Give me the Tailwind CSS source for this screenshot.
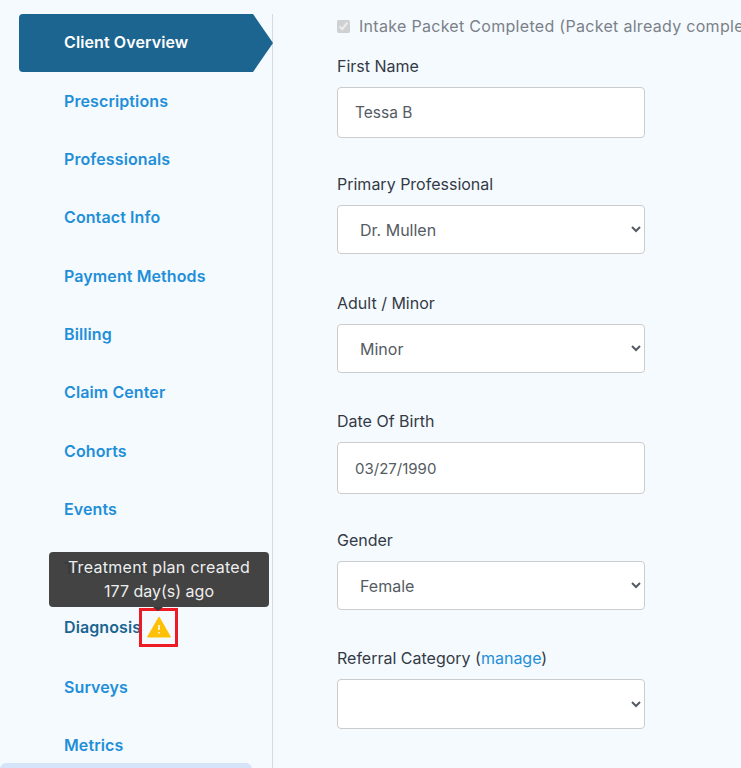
<!DOCTYPE html>
<html lang="en">
  <head>
    <meta charset="UTF-8" />
    <title>Client Overview</title>
    <script src="https://cdn.jsdelivr.net/npm/@tailwindcss/browser@4"></script>
  </head>
  <body class="bg-[#f5faff]">
    <div class="flex h-[768px] w-[741px] overflow-hidden pt-[14px] font-['Inter','Liberation_Sans',sans-serif]">
      <!-- sidebar -->
      <aside class="relative h-[754px] w-[273px] shrink-0 border-r border-[#d5dbe3] pl-[19px] text-[16px] font-semibold tracking-[0.1px] text-[#1f8fd8]">
        <div class="flex h-[58px] w-[254px] items-center rounded-[4px] bg-[#1b6590] pb-[2px] pl-[45px] text-white [clip-path:polygon(0_0,234px_0,100%_50%,234px_100%,0_100%)]">Client Overview</div>
        <div class="flex h-[59px] items-center pb-[2px] pl-[45px]">Prescriptions</div>
        <div class="flex h-[58px] items-center pb-[2px] pl-[45px]">Professionals</div>
        <div class="flex h-[58px] items-center pb-[2px] pl-[45px]">Contact Info</div>
        <div class="flex h-[59px] items-center pb-[2px] pl-[45px]">Payment Methods</div>
        <div class="flex h-[58px] items-center pb-[2px] pl-[45px]">Billing</div>
        <div class="flex h-[58px] items-center pb-[2px] pl-[45px]">Claim Center</div>
        <div class="flex h-[59px] items-center pb-[2px] pl-[45px]">Cohorts</div>
        <div class="flex h-[58px] items-center pb-[2px] pl-[45px]">Events</div>
        <div class="flex h-[59px] items-center pb-[2px] pl-[45px] text-[#1b6590]">Treatment</div>
        <div class="relative flex h-[59px] items-center pb-[2px] pl-[45px] text-[#1b6590]">
          Diagnosis
          <div class="absolute left-[120px] top-[10px] h-[39px] w-[39px] border-[3px] border-[#ed1c24] bg-[#f5faff]">
            <svg class="absolute left-[5px] top-[5px]" width="24" height="22" viewBox="0 0 24 22">
              <path d="M12 1 L23.5 21 H0.5 Z" fill="#ffc107" stroke="#ffc107" stroke-width="1" stroke-linejoin="round" />
              <rect x="11.25" y="9" width="1.5" height="5" fill="#fff" />
              <rect x="11.25" y="16" width="1.5" height="1.5" fill="#fff" />
            </svg>
          </div>
          <div class="absolute bottom-[50px] left-[30px] w-[220px] rounded-[4px] bg-[#383938]/95 pt-[3px] pb-[4px] text-center text-[16px] leading-[24px] font-normal tracking-[0.3px] text-[#eeeeee]">
            Treatment plan created<br /><span class="tracking-[0px]">177 day(s) ago</span>
            <div class="absolute -bottom-[4px] left-[104px] h-0 w-0 border-x-[5px] border-t-[4px] border-x-transparent border-t-[#383938]"></div>
          </div>
        </div>
        <div class="flex h-[60px] items-center pb-[1px] pl-[45px]">Surveys</div>
        <div class="flex h-[58px] items-center pb-[2px] pl-[45px]">Metrics</div>
        <div class="absolute left-0 top-[749px] h-[10px] w-[252px] rounded-t-[6px] bg-[#d6e4fa]"></div>
      </aside>

      <!-- form -->
      <main class="w-[468px] pl-[64px] text-[16px] text-[#333a45]">
        <div class="flex h-[24px] items-center whitespace-nowrap tracking-[0.3px] text-[#7b8188]">
          <input type="checkbox" checked disabled class="mr-[9px] h-[13px] w-[13px]" />
          Intake Packet Completed (Packet already completed)
        </div>
        <label class="mt-[19px] block h-[20px] leading-[18px]">First Name</label>
        <input type="text" value="Tessa B" class="mt-[10px] block h-[51px] w-[308px] rounded-[4px] border border-[#cccccc] bg-white pl-[17px] text-[15.5px] text-[#555b63]" />

        <label class="mt-[37px] block h-[20px] leading-[18px]">Primary Professional</label>
        <select class="mt-[10px] block h-[49px] w-[308px] rounded-[4px] border border-[#cccccc] bg-white pl-[18px] text-[#555b63]"><option>Dr. Mullen</option></select>

        <label class="mt-[40px] block h-[20px] leading-[18px]">Adult / Minor</label>
        <select class="mt-[10px] block h-[49px] w-[308px] rounded-[4px] border border-[#cccccc] bg-white pl-[18px] text-[#555b63]"><option>Minor</option></select>

        <label class="mt-[39px] block h-[20px] leading-[18px]">Date Of Birth</label>
        <input type="text" value="03/27/1990" class="mt-[10px] block h-[52px] w-[308px] rounded-[4px] border border-[#cccccc] bg-white pl-[17px] text-[15px] text-[#555b63]" />

        <label class="mt-[37px] block h-[20px] leading-[18px]">Gender</label>
        <select class="mt-[10px] block h-[49px] w-[308px] rounded-[4px] border border-[#cccccc] bg-white pl-[18px] text-[#555b63]"><option>Female</option></select>

        <label class="mt-[39px] block h-[20px] leading-[18px]">Referral Category (<a class="text-[#1f8fd8]">manage</a>)</label>
        <select class="mt-[10px] block h-[50px] w-[308px] rounded-[4px] border border-[#cccccc] bg-white pl-[18px] text-[#555b63]"><option></option></select>
      </main>
    </div>
  </body>
</html>
